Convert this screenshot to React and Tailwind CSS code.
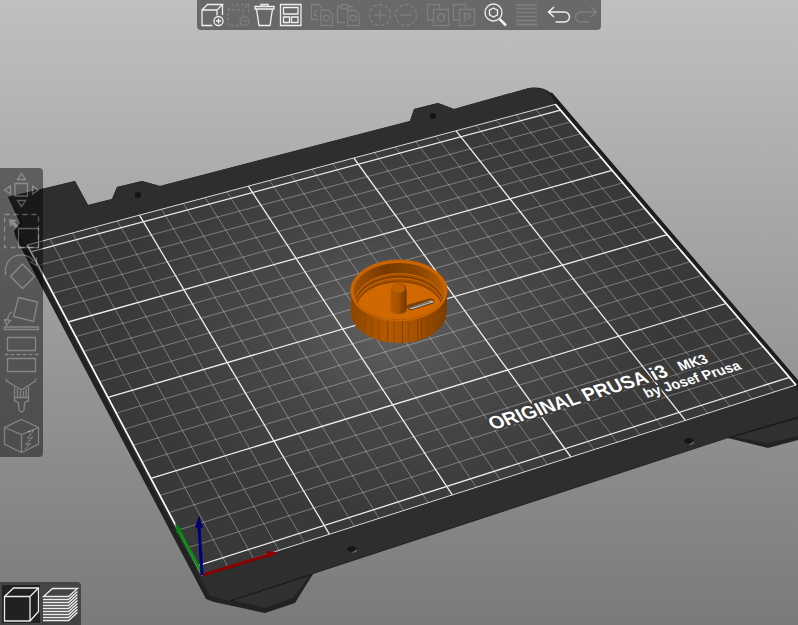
import React, { useState } from 'react';

// size of the print area in mm
const BED_W = 250;
const BED_D = 210;

// perspective projection of a bed point (mm) to screen
const project = (x, y) => {
  const u = x / BED_W;
  const v = y / BED_D;
  const w = 1 + 0.0922 * u + 0.1665 * v;
  return [(202 + 667.4 * u - 170.2 * v) / w, (575 - 154.5 * u - 289.2 * v) / w];
};

const line = (x1, y1, x2, y2) => {
  const [ax, ay] = project(x1, y1);
  const [bx, by] = project(x2, y2);
  return `M${ax.toFixed(1)} ${ay.toFixed(1)}L${bx.toFixed(1)} ${by.toFixed(1)}`;
};

const minor = [];
const major = [];
for (let x = 0; x <= BED_W; x += 10) {
  (x % 50 === 0 ? major : minor).push(line(x, 0, x, BED_D));
}
for (let y = 5; y <= BED_D; y += 10) {
  (y % 50 === 5 ? major : minor).push(line(0, y, BED_W, y));
}
const edges = [line(0, 0, BED_W, 0), line(0, BED_D, BED_W, BED_D)];
const bedPoints = [project(0, 0), project(BED_W, 0), project(BED_W, BED_D), project(0, BED_D)].join(' ');

const Hole = ({ x, y }) => (
  <g>
    <ellipse cx={x} cy={y} rx="5" ry="3" fill="#151515" />
    <path d={`M${x - 1} ${y + 3}q4 0 5 -3l1 2q-2 3 -6 1z`} fill="#6a6a6a" />
  </g>
);

const Model = () => (
  <g transform="translate(330 240) scale(0.3333)">
    <path d="M62 152V222C68 272 130 309 207 309S346 272 350 218L352 152Z" fill="url(#side)" />
    <path
      d="M84 205V260M105 221V279M125 232V292M146 238V300M193 244V308M236 242V306M292 224V284M308 214V272M322 204V258"
      stroke="#8a4500"
      strokeWidth="2"
    />
    <path d="M174 243V306M218 244V308M264 236V299M274 232V295" stroke="#7a3c00" strokeWidth="3" />
    <path d="M178 244V306M222 244V307M268 235V297" stroke="#c66300" strokeWidth="2" />
    <ellipse cx="207" cy="152" rx="145" ry="92" fill="#c96400" />
    <ellipse cx="207" cy="154" rx="136" ry="85" fill="url(#wall)" />
    <g clipPath="url(#cup)">
      <ellipse cx="208" cy="188" rx="135" ry="89" fill="#a04f00" />
      <ellipse cx="208" cy="189" rx="134" ry="88" fill="none" stroke="#cc6600" strokeWidth="3" />
      <ellipse cx="208" cy="197" rx="133" ry="87" fill="none" stroke="#6f3700" strokeWidth="3" />
      <ellipse cx="208" cy="201" rx="132" ry="86" fill="none" stroke="#cc6600" strokeWidth="3" />
      <ellipse cx="208" cy="209" rx="131" ry="84" fill="#cf6800" stroke="#7a3c00" strokeWidth="3" />
    </g>
    <path d="M62 152C66 100 128 60 207 60S348 100 352 152" fill="none" stroke="#c96400" strokeWidth="3" strokeDasharray="14 3" />
    <path d="M231 203Q228 196 238 193L296 176Q312 174 314 184Q314 190 304 193L248 210Q238 212 234 206Z" fill="#7c3d00" />
    <path d="M236 204L298 182Q311 180 312 186L248 207Q240 208 236 204Z" fill="#b5b5b5" />
    <path d="M240 203L300 185" stroke="#5a5a5a" strokeWidth="3" />
    <path d="M182 154A24 26 0 0 1 230 154V210Q226 222 206 222T182 210Z" fill="url(#peg)" />
    <path d="M187 150A19 20 0 0 1 225 150Q220 158 206 158T187 150Z" fill="#bd5e00" />
  </g>
);

const Scene = () => (
  <svg
    className="col-start-1 row-start-1 h-full w-full"
    viewBox="0 0 798 625"
    preserveAspectRatio="xMidYMid slice"
    role="img"
    aria-label="Print bed"
  >
    <defs>
      <radialGradient id="bed" gradientUnits="userSpaceOnUse" cx="390" cy="325" r="270" gradientTransform="translate(0 90) scale(1 0.72)">
        <stop offset="0" stopColor="#616161" />
        <stop offset="0.45" stopColor="#484848" />
        <stop offset="1" stopColor="#393939" />
      </radialGradient>
      <linearGradient id="side">
        <stop offset="0" stopColor="#8c4600" />
        <stop offset="0.35" stopColor="#b35900" />
        <stop offset="0.65" stopColor="#a85300" />
        <stop offset="1" stopColor="#7a3c00" />
      </linearGradient>
      <linearGradient id="wall">
        <stop offset="0" stopColor="#a04f00" />
        <stop offset="0.35" stopColor="#783b00" />
        <stop offset="0.7" stopColor="#8a4500" />
        <stop offset="1" stopColor="#b85c00" />
      </linearGradient>
      <linearGradient id="peg">
        <stop offset="0" stopColor="#b35900" />
        <stop offset="0.45" stopColor="#a85300" />
        <stop offset="1" stopColor="#703800" />
      </linearGradient>
      <clipPath id="cup">
        <ellipse cx="207" cy="154" rx="136" ry="85" />
      </clipPath>
    </defs>

    {/* sheet with its tabs and feet */}
    <path
      d="M8 197L75 181L88 205L112 199L117 187L142 181L160 186L410 121L414 109L438 103L454 109L529 88Q542 86 551 93L806 391V438L768 448L728 438L603 479L313 574L295 603L265 613L214 602L206 599L16 238L14 231L20 223Z"
      fill="#222222"
    />
    <path
      d="M8 197L75 181L88 205L112 199L117 187L142 181L160 186L410 121L414 109L438 103L454 109L529 88Q540 87 547 92L806 400V415L728 438L603 478L313 573L230 601L210 596L20 236L18 230L23 222Z"
      fill="#2e2e2e"
    />
    <path d="M232 600L265 608L293 598L311 574Z" fill="#303030" />
    <path d="M732 437L768 443L798 436V419Z" fill="#303030" />
    <path d="M230 601L313 574M728 438L798 417" stroke="#161616" fill="none" />
    <path d="M551 93L806 391" stroke="#1b1b1b" strokeWidth="2" />

    <polygon points={bedPoints} fill="url(#bed)" />
    <path d={minor.join('')} stroke="#ffffff" strokeOpacity="0.32" fill="none" />
    <path d={major.join('')} stroke="#ececec" strokeWidth="1.3" fill="none" />
    <path d={edges.join('')} stroke="#d8d8d8" fill="none" />
    <path d={line(0, 0, 0, BED_D) + line(BED_W, 0, BED_W, BED_D)} stroke="#f4f4f4" strokeWidth="1.6" fill="none" />

    <ellipse cx="138" cy="195" rx="3" ry="3" fill="#141414" />
    <ellipse cx="433" cy="116" rx="3" ry="3" fill="#141414" />
    <Hole x={352} y={549} />
    <Hole x={689} y={441} />

    {/* bed print, lies along the front edge */}
    <g
      fill="#ffffff"
      stroke="#3c3c3c"
      strokeWidth="4"
      strokeLinejoin="round"
      className="font-['Liberation_Sans',sans-serif] font-bold [paint-order:stroke]"
    >
      <text transform="translate(493 430) rotate(-17) skewX(14)" className="text-[19px]">ORIGINAL PRUSA i3</text>
      <text transform="translate(681 371) rotate(-17) skewX(14)" className="text-[14px]">MK3</text>
      <text transform="translate(647 398) rotate(-17) skewX(14)" className="text-[14px]">by Josef Prusa</text>
    </g>

    <Model />

    {/* origin axes */}
    <g strokeWidth="3" fill="none">
      <path d="M203 575L268 555" stroke="#860000" />
      <path d="M266 551L278 552L269 558Z" fill="#8c0000" />
      <path d="M202 573L179 531" stroke="#0a8f14" />
      <path d="M175 523L182 530L177 534Z" fill="#0a8010" />
      <path d="M202 575L199 527" stroke="#00007c" />
      <path d="M199 516L203 527Q199 530 195 527Z" fill="#00006e" />
    </g>
  </svg>
);

const Gem = ({ cx, cy }) => <path d={`M${cx} ${cy - 3}l3 1.5v3l-3 1.5l-3 -1.5v-3z`} />;

const Letter = ({ children }) => (
  <text x="16" y="20" textAnchor="middle" fill="currentColor" stroke="none" className="font-['Liberation_Sans',sans-serif] text-[12px] font-bold">
    {children}
  </text>
);

const icons = {
  add: (
    <>
      <path d="M13.5 23.5H3V8H18V13.5M3 8L8.5 2.5H23.5L18 8M23.5 2.5V13" />
      <circle cx="19.5" cy="19" r="4.5" />
      <path d="M17 19h5M19.5 16.5v5" />
    </>
  ),
  remove: (
    <>
      <path strokeDasharray="3 2" d="M13.5 23.5H3V8H18V13.5M3 8L8.5 2.5H23.5L18 8M23.5 2.5V13" />
      <circle cx="19.5" cy="19" r="4.5" />
      <path d="M17 19h5" />
    </>
  ),
  trash: <path d="M4 4.5H23V7H4ZM10 4V2.5H17V4M5.5 7L8 23.5H19L21.5 7" />,
  arrange: (
    <>
      <path d="M3.5 2.5H24V23.5H3.5Z" />
      <path d="M6.5 5.5H21V12H6.5ZM6.5 15H12.5V20.5H6.5ZM14.5 15H21V20.5H14.5Z" />
    </>
  ),
  copy: (
    <>
      <path d="M9 17.5H2.5V2.5H10L13.5 6M12 8H19.5L23.5 12V23.5H12Z" />
      <Gem cx={17.5} cy={16} />
      <path d="M9 8l-3 1.5v3.5l3 1.5" />
    </>
  ),
  paste: (
    <>
      <path d="M10 20.5H2.5V4.5H6.5V2.5H13V4.5H17V7M6.5 4.5V6.5H13V4.5M12.5 8.5H20.5L24 12V23.5H12.5Z" />
      <Gem cx={18} cy={16} />
    </>
  ),
  more: (
    <>
      <circle cx="13" cy="13" r="10.5" strokeDasharray="4 2" />
      <path d="M7.5 13h11M13 7.5v11" />
    </>
  ),
  fewer: (
    <>
      <circle cx="13" cy="13" r="10.5" strokeDasharray="4 2" />
      <path d="M7.5 13h11" />
    </>
  ),
  splitObjects: (
    <>
      <path d="M8 18H2.5V2.5H14.5V7M8.5 7.5H23.5V23.5H8.5Z" />
      <Letter>O</Letter>
    </>
  ),
  splitParts: (
    <>
      <path d="M8 18H2.5V2.5H14.5V7M8.5 7.5H23.5V23.5H8.5Z" />
      <Letter>P</Letter>
    </>
  ),
  search: (
    <>
      <circle cx="10.5" cy="10.5" r="8.5" />
      <path d="M10.5 6l4 2.2v4.6l-4 2.2l-4 -2.2v-4.6z" />
      <path d="M16.5 17L23 23.5" strokeWidth="2.5" />
    </>
  ),
  layers: (
    <>
      <path d="M1 3h21M1 6.5h21" />
      <path d="M1 10.5h21M1 14.5h21" strokeWidth="1.5" />
      <path d="M1 18.5h21M1 22.5h21" strokeWidth="2" />
    </>
  ),
  undo: <path strokeWidth="1.5" d="M7 5L1.5 10L7 15M1.5 10H17.5A5 5 0 0 1 17.5 20H8.5" />,
  redo: <path strokeWidth="1.5" d="M18 5L23.5 10L18 15M23.5 10H7.5A5 5 0 0 0 7.5 20H16.5" />,
};

const toolGroups = [
  [
    { icon: 'add', label: 'Add', on: true },
    { icon: 'remove', label: 'Delete' },
    { icon: 'trash', label: 'Delete all', on: true },
    { icon: 'arrange', label: 'Arrange', on: true },
  ],
  [
    { icon: 'copy', label: 'Copy' },
    { icon: 'paste', label: 'Paste' },
  ],
  [
    { icon: 'more', label: 'Add instance' },
    { icon: 'fewer', label: 'Remove instance' },
  ],
  [
    { icon: 'splitObjects', label: 'Split to objects' },
    { icon: 'splitParts', label: 'Split to parts' },
  ],
  [{ icon: 'search', label: 'Search', on: true }],
  [{ icon: 'layers', label: 'Variable layer height' }],
  [
    { icon: 'undo', label: 'Undo', on: true },
    { icon: 'redo', label: 'Redo' },
  ],
];

const gizmos = [
  {
    label: 'Move',
    art: (
      <path d="M15 14.5H27.5V27H15ZM21.5 4.5L17.5 10.5H25.5ZM17.5 31.5H25.5L21.5 37.5ZM4.5 21L10.5 17V25ZM38.5 21L32.5 17V25Z" />
    ),
  },
  {
    label: 'Scale',
    art: (
      <>
        <path d="M4.5 4.5H38.5V37.5H4.5Z" strokeDasharray="5 4" />
        <path d="M18.5 18.5H38.5V37.5H18.5Z" />
        <path d="M9 9l8 1l-2.5 2l4 4l-2.5 2.5l-4 -4l-2 2.5z" fill="currentColor" stroke="none" />
      </>
    ),
  },
  {
    label: 'Rotate',
    art: (
      <>
        <path d="M5.5 24C3 3 26 -2 34 11" />
        <path d="M30 10.5L36.5 14.5V6.5" />
        <path d="M22.5 13L34.5 25.5L22.5 37.5L10.5 25.5Z" />
      </>
    ),
  },
  {
    label: 'Place on face',
    art: (
      <>
        <path d="M18.5 5.5L37.5 10L33.5 29.5L13.5 24.5ZM4.5 35H38.5V37.5H4.5Z" />
        <path d="M12 20Q8 22 7.5 28M4.5 27.5L10.5 28.5L6.5 33Z" />
      </>
    ),
  },
  {
    label: 'Cut',
    art: (
      <>
        <path d="M7.5 4.5H35.5V17.5H7.5ZM7.5 25.5H35.5V38.5H7.5Z" />
        <path d="M4.5 21.5H38.5" strokeDasharray="4 2" strokeWidth="1.5" />
      </>
    ),
  },
  {
    label: 'Paint-on supports',
    art: (
      <path d="M6.5 4.5V7L21.5 16L35.5 7V4.5M14.5 13V23.5H28.5V13M17.5 15V23M20.5 17V23M23.5 17V23M26 15V23M14.5 23.5V27Q18.5 27.5 18.5 30L19 36Q21.5 40 24 36L24.5 30Q24.5 27.5 28.5 27V23.5" />
    ),
  },
  {
    label: 'Seam painting',
    art: (
      <>
        <path d="M21.5 4.5L38.5 12.5V29L21.5 37.5L4.5 29V12.5ZM4.5 12.5L21.5 19.5L38.5 12.5M21.5 19.5V37.5" />
        <path d="M28 17l5 -1l-5 7h4l-6 6h4l-5 5" strokeDasharray="3 1" />
      </>
    ),
  },
];

const layerRows = [0, 1, 2, 3, 4, 5, 6, 7];

const views = [
  {
    id: 'editor',
    label: '3D editor view',
    art: <path d="M2.5 11.5H28V36H2.5ZM2.5 11.5L11.5 3H36.5V26.5L28 36M28 11.5L36.5 3" />,
  },
  {
    id: 'preview',
    label: 'Preview',
    art: (
      <>
        <path d="M2.5 11.5L11.5 3.5H36.5L27.5 11.5Z" />
        {layerRows.map(i => (
          <path key={i} d={`M2 ${14.5 + i * 3}H27.5L36.5 ${6.5 + i * 3}`} strokeWidth="1.5" />
        ))}
      </>
    ),
  },
];

const App = () => {
  const [view, setView] = useState('editor');

  return (
    <main className="grid h-screen grid-cols-1 grid-rows-1 overflow-hidden bg-linear-to-b from-[#c0c0c0] to-[#7a7a7a]">
      <Scene />

      <div
        role="toolbar"
        aria-label="Main toolbar"
        className="z-10 col-start-1 row-start-1 flex gap-1.5 self-start justify-self-center rounded-b bg-black/45 p-0.5"
      >
        {toolGroups.map((group, i) => (
          <div key={i} className="flex">
            {group.map(tool => (
              <button
                key={tool.icon}
                type="button"
                aria-label={tool.label}
                disabled={!tool.on}
                className="size-[26px] text-[#f0f0f0] disabled:text-white/15"
              >
                <svg viewBox="0 0 26 26" className="size-full" fill="none" stroke="currentColor" strokeWidth="1.3">
                  {icons[tool.icon]}
                </svg>
              </button>
            ))}
          </div>
        ))}
      </div>

      <div
        role="toolbar"
        aria-label="Gizmos"
        className="z-10 col-start-1 row-start-1 flex flex-col self-center justify-self-start rounded-r bg-black/45 py-px"
      >
        {gizmos.map(gizmo => (
          <button key={gizmo.label} type="button" aria-label={gizmo.label} disabled className="h-[41px] w-[43px] text-white/30">
            <svg viewBox="0 0 43 41" className="size-full" fill="none" stroke="currentColor" strokeWidth="1.3">
              {gizmo.art}
            </svg>
          </button>
        ))}
      </div>

      <div
        role="toolbar"
        aria-label="View"
        className="z-10 col-start-1 row-start-1 flex gap-px self-end justify-self-start rounded-tr bg-black/45 px-0.5 pt-[3px] pb-0.5"
      >
        {views.map(item => (
          <button
            key={item.id}
            type="button"
            aria-label={item.label}
            aria-pressed={view === item.id}
            onClick={() => setView(item.id)}
            className="size-[38px] text-[#ececec] aria-pressed:bg-[#212121]"
          >
            <svg viewBox="0 0 38 38" className="size-full" fill="none" stroke="currentColor" strokeWidth="1.3">
              {item.art}
            </svg>
          </button>
        ))}
      </div>
    </main>
  );
};

export default App;
